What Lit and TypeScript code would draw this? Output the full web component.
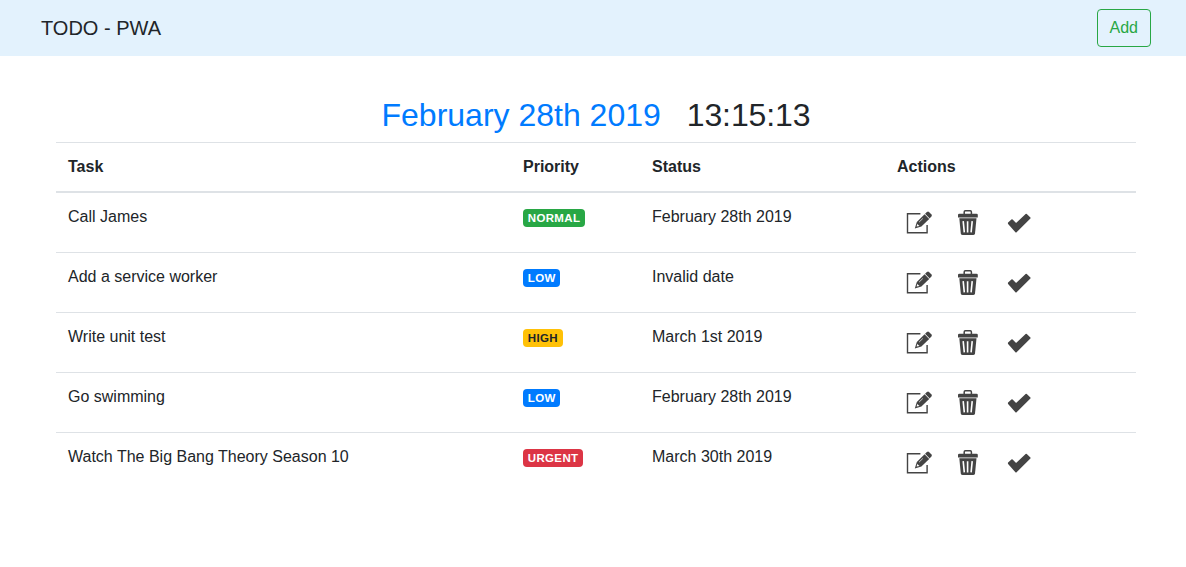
import { LitElement, html, css, svg } from "lit";
import { customElement } from "lit/decorators.js";

interface Task {
  name: string;
  priority: "normal" | "low" | "high" | "urgent";
  status: string;
}

const tasks: Task[] = [
  { name: "Call James", priority: "normal", status: "February 28th 2019" },
  { name: "Add a service worker", priority: "low", status: "Invalid date" },
  { name: "Write unit test", priority: "high", status: "March 1st 2019" },
  { name: "Go swimming", priority: "low", status: "February 28th 2019" },
  { name: "Watch The Big Bang Theory Season 10", priority: "urgent", status: "March 30th 2019" },
];

const editIcon = svg`
  <path d="M20.4 8.7H7.5V27.8H27.1V20" fill="none" stroke="#444" stroke-width="1.4"/>
  <path d="M14.8 23.4L16.8 16.9L24.6 9.3L29.2 13.9L21.4 21.5Z" fill="#444"/>
  <path d="M25.1 8.8L26.9 7.1Q28 6.2 29 7L31.5 9.5Q32.2 10.4 31.5 11.3L29.7 13.4Z" fill="#444"/>
  <path d="M19.1 17.1L22.8 13.5" stroke="#fff" stroke-width="0.7"/>
  <path d="M16.6 21.6L17.3 19.1L19.5 21.1Z" fill="#fff"/>`;

const trashIcon = svg`
  <path d="M14.2 9V6.9Q14.2 5.8 15.3 5.8H20.3Q21.4 5.8 21.4 6.9V9" fill="none" stroke="#444" stroke-width="1.5"/>
  <path d="M8 12.6V10Q8 8.7 9.3 8.7H26.5Q27.8 8.7 27.8 10V12.6Z" fill="#444"/>
  <path d="M9.3 13.2H26.5L25 28.4Q24.8 30 23 30H12.8Q11 30 10.8 28.4Z" fill="#444"/>
  <path d="M13.2 16.2L14.3 27.4M17.6 16.2V27.4M22.2 16.2L21.1 27.4" stroke="#fff" stroke-width="1.6"/>`;

const checkIcon = svg`
  <path d="M8.1 17.5L11.4 14.4Q12 13.9 12.6 14.4L16.1 17.9L25.6 8.9Q26.2 8.4 26.8 8.9L30.4 12.4Q30.9 13 30.4 13.6L16.6 27.3Q16 27.8 15.4 27.3L8.1 18.9Q7.6 18.2 8.1 17.5Z" fill="#444"/>`;

@customElement("app-root")
export class AppRoot extends LitElement {
  static styles = css`
    :host {
      display: block;
      min-height: 100vh;
      background: #fff;
      color: #212529;
      font: 16px/24px "Liberation Sans", Arial, sans-serif;
    }
    .navbar {
      display: flex;
      align-items: center;
      justify-content: space-between;
      box-sizing: border-box;
      height: 56px;
      padding: 0 35px 0 41px;
      background: #e3f2fd;
    }
    .brand {
      font-size: 20px;
      line-height: 30px;
    }
    .add {
      box-sizing: border-box;
      height: 38px;
      padding: 6px 12px;
      border: 1px solid #28a745;
      border-radius: 4px;
      background: transparent;
      color: #28a745;
      font: inherit;
    }
    .content {
      width: 1080px;
      margin: 40px 0 0 56px;
    }
    h2 {
      margin: 0;
      height: 46px;
      font-size: 32px;
      font-weight: 500;
      line-height: 38px;
      text-align: center;
      word-spacing: -0.25px;
    }
    .date {
      color: #007bff;
      word-spacing: 0;
    }
    .time {
      letter-spacing: -0.1px;
    }
    .row {
      display: grid;
      grid-template-columns: 455px 129px 245px 251px;
      box-sizing: border-box;
      height: 60px;
      border-top: 1px solid #dee2e6;
    }
    .head {
      height: 51px;
      border-bottom: 2px solid #dee2e6;
      font-weight: 700;
    }
    .head + .row {
      height: 59px;
      border-top: 0;
    }
    .cell {
      padding: 12px 12px 0;
    }
    .badge {
      display: inline-block;
      padding: 3px 4.8px;
      border-radius: 4px;
      color: #fff;
      font-size: 11.5px;
      font-weight: 700;
      line-height: 12px;
      letter-spacing: 0.34px;
      text-transform: uppercase;
      vertical-align: baseline;
    }
    .normal { background: #28a745; }
    .low { background: #007bff; }
    .high { background: #ffc107; color: #212529; }
    .urgent { background: #dc3545; }
    .actions {
      display: flex;
      gap: 10px;
      padding-left: 15px;
    }
    .icon {
      display: block;
      width: 40px;
      height: 34px;
    }
  `;

  private icon(shape: unknown, label: string) {
    return html`<svg class="icon" viewBox="0 0 40 34" role="img" aria-label=${label}>${shape}</svg>`;
  }

  render() {
    return html`
      <nav class="navbar">
        <span class="brand">TODO - PWA</span>
        <button class="add">Add</button>
      </nav>
      <main class="content">
        <h2><span class="date">February 28th 2019</span>&nbsp;&nbsp; <span class="time">13:15:13</span></h2>
        <div class="row head">
          <div class="cell">Task</div>
          <div class="cell">Priority</div>
          <div class="cell">Status</div>
          <div class="cell">Actions</div>
        </div>
        ${tasks.map(
          (task) => html`
            <div class="row">
              <div class="cell">${task.name}</div>
              <div class="cell"><span class="badge ${task.priority}">${task.priority}</span></div>
              <div class="cell">${task.status}</div>
              <div class="cell actions">
                ${this.icon(editIcon, "Edit")}${this.icon(trashIcon, "Delete")}${this.icon(checkIcon, "Done")}
              </div>
            </div>
          `
        )}
      </main>
    `;
  }
}
